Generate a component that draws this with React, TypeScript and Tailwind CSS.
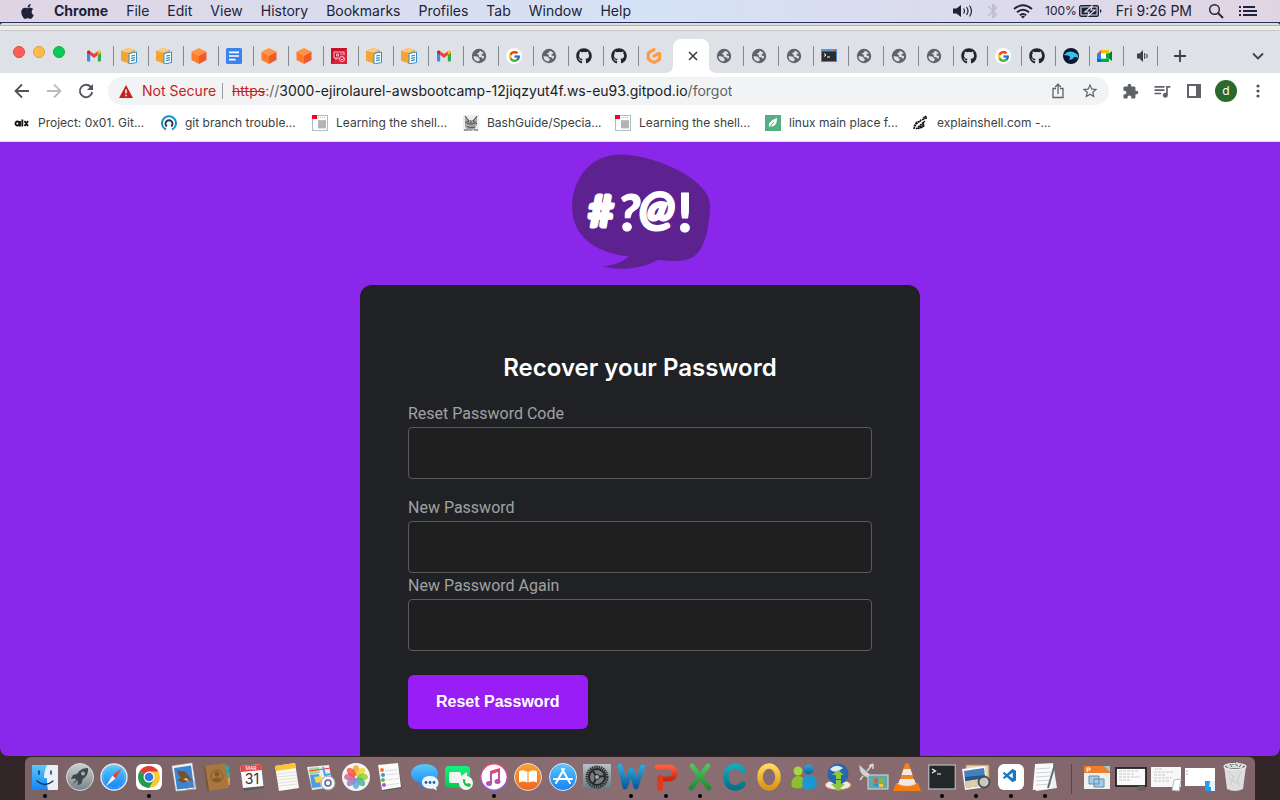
import type { ReactNode } from "react";
import { FaApple, FaGithub } from "react-icons/fa";
import { FcGoogle } from "react-icons/fc";
import { SiGitpod } from "react-icons/si";
import { MdBluetooth, MdExtension, MdQueueMusic, MdStarBorder } from "react-icons/md";
import { VscVscode } from "react-icons/vsc";

/* ---------- favicons ---------- */

const Gmail = () => (
  <svg viewBox="0 0 16 16" className="size-4">
    <path d="M1 13.4V4.2l3.2 2.4v6.8H2a1 1 0 0 1-1-1z" fill="#4285f4" />
    <path d="M15 13.4V4.2l-3.2 2.4v6.8H14a1 1 0 0 0 1-1z" fill="#34a853" />
    <path d="M11.8 3.3v3.8L15 4.7V4c0-1.500-1.600-1.900-2.500-1.300z" fill="#fbbc04" />
    <path d="M4.200 7.100V3.300L8 6.100l3.800-2.800v3.800L8 10z" fill="#ea4335" />
    <path d="M1 4v.7l3.200 2.400V3.300l-.7-.6C2.600 2.100 1 2.500 1 4z" fill="#c5221f" />
  </svg>
);

const BoxDoc = () => (
  <svg viewBox="0 0 16 16" className="size-4">
    <path d="M0 3 7 0l7 2v3l-6 1v9.500L0 12.500z" fill="#f2a83b" />
    <path d="m0 3 7 1.800L14 2 7 0z" fill="#f8c98a" />
    <path d="M0 3v9.500l7 2.500V4.800z" fill="#f0a535" />
    <path d="M8 5.500 15.500 4v10.500L8 16z" fill="#fff" stroke="#2d8fc4" />
    <path d="m10 8 4-.7M10 10.300l4-.7M10 12.600l4-.7" stroke="#2d8fc4" strokeWidth="1.200" />
  </svg>
);

const OrangeCube = () => (
  <svg viewBox="0 0 16 16" className="size-4">
    <path d="m8 0 7.500 3.800L8 7.800.5 3.800z" fill="#ff9340" />
    <path d="M.5 3.800 8 7.800V16L.5 12z" fill="#ff7a2d" />
    <path d="M15.500 3.800 8 7.800V16l7.500-4z" fill="#ee5b2b" />
  </svg>
);

const Docs = () => (
  <svg viewBox="0 0 16 16" className="size-4">
    <rect width="16" height="16" rx="1.500" fill="#3b82f0" />
    <path d="M3 4.300h10M3 8h10M3 11.700h6.500" stroke="#fff" strokeWidth="1.700" />
  </svg>
);

const RedAws = () => (
  <svg viewBox="0 0 16 16" className="size-4">
    <rect width="16" height="16" fill="#c8102e" />
    <path d="M16 0v16H0z" fill="#dc2338" />
    <g fill="none" stroke="#f9c5cc">
      <path d="M8 10H3V4h10v3M5.500 6h2v2h-2zM9 6h2.500M5 10v2" />
      <circle cx="11" cy="11" r="2.500" />
      <path d="m10 11 1 1 2-2" />
    </g>
  </svg>
);

const Globe = () => (
  <svg viewBox="0 0 16 16" className="size-4">
    <circle cx="8" cy="8" r="7.200" fill="#5f6368" />
    <path d="M2.500 8.300c1.800-.3 3.300-.2 4.400.5.900.6.300 1.400 1.200 1.800 1 .3.900.8.600 1.500-.3.700-.9.800-1.100 1.400C4.600 13.500 2.500 11.200 2.500 8.300z" fill="#dee1e6" />
    <path d="M9 3c1.500.2 2.700 1 3.600 2.300-.5.700-1.300.6-1.900 1-.7.500-.1 1.200.6 1.400.7.200 1.400 0 1.800.4 0 1-.4 2-.9 2.800-.8.100-.9-.9-1.600-1.300-.9-.5-2.200-.1-2.700-1-.4-1 .2-1.300-.2-1.800-.5-.5-1.500-.2-1.700-1 0-.8 1.400-.8 1.900-1.300.5-.6.300-1.200 1.100-1.500z" fill="#dee1e6" />
  </svg>
);
const Github = () => <FaGithub className="size-4 text-[#22262b]" />;
const Google = () => (
  <span className="flex size-4 items-center justify-center rounded-full bg-white">
    <FcGoogle className="size-[13px]" />
  </span>
);
const Gitpod = () => <SiGitpod className="size-4 text-[#ff9b45]" />;

const TerminalFav = () => (
  <svg viewBox="0 0 16 16" className="size-4">
    <rect y="1" width="16" height="13" fill="#4a86c8" />
    <path d="M0 1h16v2.500H0z" fill="#5c98dc" />
    <path d="M13 1.500h2v1.500h-2z" fill="#f0502c" />
    <rect x="1" y="3.500" width="14" height="9.500" fill="#2b2d30" />
    <path d="m3 5.500 2 1.500-2 1.500M6 9h3" fill="none" stroke="#fff" />
  </svg>
);

const WaveFav = () => (
  <svg viewBox="0 0 16 16" className="size-4">
    <circle cx="8" cy="8" r="8" fill="#06182d" />
    <path d="M.8 7.500C3 3.500 7 2.800 10.500 4l3.800 2.200c.9 1.200.7 2.800.2 4.300-.7-1.500-2-1.800-3.500-1.500-.7 2.300-2.800 3-5.500 2.700 1.500-.9 1.800-2 1.300-3.200C4.500 7.300 2.500 7.200.8 7.500z" fill="#3cbdf0" />
  </svg>
);

const Meet = () => (
  <svg viewBox="0 0 16 16" className="size-4">
    <path d="M4 2h7a1 1 0 0 1 1 1v2.500H4z" fill="#fbbc04" />
    <path d="M4 2v4H0z" fill="#ea4335" />
    <path d="M0 6h4v5H0z" fill="#2684fc" />
    <path d="M0 11h4v3H1a1 1 0 0 1-1-1z" fill="#0066da" />
    <path d="M4 10.500h8V13a1 1 0 0 1-1 1H4z" fill="#00ac47" />
    <path d="M4 5.500h5v5H4z" fill="#fff" />
    <path d="m9 8 6-5v10z" fill="#00832d" />
    <path d="M9 5.500h3v5H9z" fill="#00ac47" />
  </svg>
);

const AudioTab = () => (
  <svg viewBox="0 0 16 16" className="ml-1 size-4">
    <path d="M2 5.500h2.500L8 2v12l-3.500-3.500H2z" fill="#3c4043" />
    <path d="M9.700 5v6M12 6v4" stroke="#3c4043" strokeWidth="1.100" />
  </svg>
);

type Fav = { title: string; icon: () => ReactNode };
const t = (title: string, icon: () => ReactNode): Fav => ({ title, icon });

const leftTabs: Fav[] = [
  t("Gmail", Gmail), t("Storage", BoxDoc), t("Storage", BoxDoc), t("Cube", OrangeCube), t("Docs", Docs),
  t("Cube", OrangeCube), t("Cube", OrangeCube), t("Console", RedAws), t("Storage", BoxDoc), t("Storage", BoxDoc),
  t("Gmail", Gmail), t("Site", Globe), t("Google", Google), t("Site", Globe), t("GitHub", Github),
  t("GitHub", Github), t("Gitpod", Gitpod),
];
const midTabs: Fav[] = [
  t("Site", Globe), t("Site", Globe), t("Site", Globe), t("Terminal", TerminalFav),
  t("Site", Globe), t("Site", Globe), t("Site", Globe),
];
const rightTabs: Fav[] = [
  t("GitHub", Github), t("Google", Google), t("GitHub", Github), t("Wave", WaveFav), t("Meet", Meet), t("Audio", AudioTab),
];

function Tab({ tab, last, narrow }: { tab: Fav; last?: boolean; narrow?: boolean }) {
  return (
    <button
      aria-label={tab.title}
      className={`flex h-5 shrink-0 items-center border-r pl-[7px] ${narrow ? "w-[34px]" : "w-[35px]"} ${
        last ? "border-transparent" : "border-[#85888d]"
      }`}
    >
      {tab.icon()}
    </button>
  );
}

/* ---------- menu bar ---------- */

const menus = ["File", "Edit", "View", "History", "Bookmarks", "Profiles", "Tab", "Window", "Help"];

function MenuBar() {
  return (
    <header className="flex h-[23px] shrink-0 items-center justify-between border-b border-[#27305c] bg-linear-to-r from-[#dfd5e4] via-[#d5e2f6] to-[#e1d5e3] pr-[23px] pl-[19px] text-sm text-[#20223a]">
      <nav className="flex items-center gap-[18px]">
        <button aria-label="Apple menu"><FaApple className="size-[17px]" /></button>
        <button className="font-bold">Chrome</button>
        {menus.map((m) => <button key={m}>{m}</button>)}
      </nav>
      <div className="flex items-center">
        <svg viewBox="0 0 22 16" className="h-4 w-[22px]">
          <path d="M1 5.500h3.500L9 2v12l-4.500-3.500H1z" fill="#20223a" />
          <path d="M11.500 5.500q2 2.500 0 5M14.500 4q3 4 0 8M17.500 2.500q4 5.500 0 11" fill="none" stroke="#20223a" strokeWidth="1.200" />
        </svg>
        <MdBluetooth className="ml-[10px] size-[18px] text-[#b9bdcf]" />
        <svg viewBox="0 0 20 15" className="ml-[11px] h-[15px] w-5">
          <g fill="none" stroke="#20223a" strokeWidth="1.900">
            <path d="M1 5q9-7.500 18 0M4 8.200q6-5 12 0M6.800 11.200q3.200-2.600 6.400 0" />
          </g>
          <path d="m8 12.500 2 2 2-2q-2-1.500-4 0z" fill="#20223a" />
        </svg>
        <span className="ml-3 text-xs">100%</span>
        <svg viewBox="0 0 23 12" className="ml-[2px] h-3 w-[23px]">
          <rect x=".7" y=".7" width="18.600" height="10.600" rx="1.500" fill="none" stroke="#20223a" strokeWidth="1.400" />
          <rect x="2.500" y="2.500" width="15" height="7" fill="#20223a" />
          <path d="M13 1 6 7h4l-1 4 7-6h-4z" fill="#20223a" stroke="#dfe2f2" strokeWidth="1.200" />
          <path d="M21 4v4l1.300-1V5z" fill="#20223a" />
        </svg>
        <span className="ml-[14px]">Fri 9:26 PM</span>
        <svg viewBox="0 0 16 16" className="ml-4 size-4">
          <circle cx="6.500" cy="6.500" r="4.800" fill="none" stroke="#20223a" strokeWidth="1.400" />
          <path d="m10 10 5 5" stroke="#20223a" strokeWidth="1.800" />
        </svg>
        <svg viewBox="0 0 18 12" className="ml-[15px] h-3 w-[18px]">
          <path d="M0 2h2M0 6h2M0 10h2M4 2h12M4 6h14M4 10h14" stroke="#20223a" strokeWidth="1.900" />
        </svg>
      </div>
    </header>
  );
}

/* ---------- browser chrome ---------- */

function TabStrip() {
  return (
    <div className="flex h-[42px] shrink-0 items-end bg-[#dee1e6]">
      <div className="flex h-[42px] w-[79px] shrink-0 items-center gap-2 pl-[13px]">
        <button aria-label="Close window" className="size-3 rounded-full border border-[#e2463f] bg-[#ff5f57]" />
        <button aria-label="Minimise window" className="size-3 rounded-full border border-[#e2a03a] bg-[#febc4a]" />
        <button aria-label="Zoom window" className="size-3 rounded-full border border-[#12ac3e] bg-[#0acb55]" />
      </div>
      <div className="flex pb-[7px]">
        {leftTabs.map((tab, i) => <Tab key={i} tab={tab} last={i === leftTabs.length - 1} />)}
      </div>
      <div className="-ml-[9px] flex shrink-0 items-end">
        <svg viewBox="0 0 8 8" className="size-2"><path d="M8 0v8H0q8 0 8-8" fill="#fff" /></svg>
        <button aria-label="Close tab" className="flex h-[34px] w-[36px] items-center justify-center rounded-t-lg bg-white pl-1">
          <svg viewBox="0 0 10 10" className="size-[10px]"><path d="m1 1 8 8M9 1 1 9" stroke="#3c4043" strokeWidth="1.600" /></svg>
        </button>
        <svg viewBox="0 0 8 8" className="size-2"><path d="M0 0v8h8q-8 0-8-8" fill="#fff" /></svg>
      </div>
      <div className="-ml-2 flex pb-[7px]">
        {midTabs.map((tab, i) => <Tab key={i} tab={tab} />)}
        {rightTabs.map((tab, i) => <Tab key={i} tab={tab} narrow />)}
      </div>
      <button aria-label="New tab" className="mb-[10px] ml-[15px]">
        <svg viewBox="0 0 14 14" className="size-[14px]"><path d="M7 1v12M1 7h12" stroke="#3c4043" strokeWidth="1.800" /></svg>
      </button>
      <button aria-label="Search tabs" className="mr-4 mb-[13px] ml-auto">
        <svg viewBox="0 0 12 8" className="h-2 w-3"><path d="m1 1.500 5 5 5-5" fill="none" stroke="#3c4043" strokeWidth="1.800" /></svg>
      </button>
    </div>
  );
}

function Toolbar() {
  return (
    <div className="flex h-9 shrink-0 items-center bg-white pr-[14px] pl-[14px] text-[#5f6368]">
      <button aria-label="Back">
        <svg viewBox="0 0 16 16" className="size-4"><path d="M15 8H2M8 1.500 1.500 8 8 14.500" fill="none" stroke="#50545a" strokeWidth="1.800" /></svg>
      </button>
      <button aria-label="Forward" className="ml-4">
        <svg viewBox="0 0 16 16" className="size-4"><path d="M1 8h13M8 1.500 14.500 8 8 14.500" fill="none" stroke="#b9bbbe" strokeWidth="1.800" /></svg>
      </button>
      <button aria-label="Reload" className="ml-4">
        <svg viewBox="0 0 16 16" className="size-4">
          <path d="M13.200 4.500A6.200 6.200 0 1 0 14.200 9" fill="none" stroke="#50545a" strokeWidth="1.900" />
          <path d="M15 1v6H9z" fill="#50545a" />
        </svg>
      </button>
      <div className="ml-[14px] flex h-7 min-w-0 flex-1 items-center rounded-full bg-[#f1f3f4] pr-[10px] pl-[11px] text-sm">
        <svg viewBox="0 0 14 13" className="h-[13px] w-[14px] shrink-0">
          <path d="M7 0 14 13H0z" fill="#c5221f" />
          <path d="M7 4.500V8.500M7 9.800v1.500" stroke="#fff" strokeWidth="1.500" />
        </svg>
        <span className="ml-[9px] whitespace-nowrap text-[#c5221f]">Not Secure</span>
        <span className="mr-[9px] ml-[6px] h-4 w-px shrink-0 bg-[#9a9da1]" />
        <a href="#forgot" className="truncate text-[#5f6368]">
          <s className="text-[#c5221f]">https</s>://<span className="text-[#202124]">3000-ejirolaurel-awsbootcamp-12jiqzyut4f.ws-eu93.gitpod.io</span>/forgot
        </a>
        <button aria-label="Share" className="ml-auto">
          <svg viewBox="0 0 12 16" className="h-4 w-3">
            <path d="M4 5.500H1v9h10v-9H8M6 11V2M3.200 4 6 1.200 8.800 4" fill="none" stroke="#5f6368" strokeWidth="1.300" />
          </svg>
        </button>
        <button aria-label="Bookmark this page" className="ml-[17px]"><MdStarBorder className="size-[18px]" /></button>
      </div>
      <button aria-label="Extensions" className="ml-[13px]"><MdExtension className="size-[17px]" /></button>
      <button aria-label="Media controls" className="ml-[13px]"><MdQueueMusic className="size-[20px]" /></button>
      <button aria-label="Side panel" className="ml-[15px]">
        <svg viewBox="0 0 14 14" className="size-[14px]">
          <rect x="1" y="1" width="12" height="12" fill="none" stroke="#5f6368" strokeWidth="2" />
          <path d="M9 1h4v12H9z" fill="#5f6368" />
        </svg>
      </button>
      <button className="ml-[14px] size-[22px] rounded-full bg-[#2b6a2c] text-xs leading-[22px] text-white">d</button>
      <button aria-label="Menu" className="ml-[13px]">
        <svg viewBox="0 0 16 16" className="size-4 fill-[#50545a]">
          <circle cx="8" cy="3" r="1.600" /><circle cx="8" cy="8" r="1.600" /><circle cx="8" cy="13" r="1.600" />
        </svg>
      </button>
    </div>
  );
}

const PageIcon = () => (
  <svg viewBox="0 0 16 16" className="size-4">
    <rect x=".5" y=".5" width="15" height="15" fill="#fff" stroke="#a8bfc7" />
    <rect width="5" height="4" fill="#f5001d" />
    <path d="M6 2.500h8" stroke="#bbb" strokeDasharray="1 1" />
    <path d="M6 6h8M6 8h8M6 10h8M6 12h8" stroke="#9b9b9b" />
    <path d="M6 5.500h8v8H6z" fill="#aaa" opacity=".7" />
  </svg>
);

const bookmarks: { label: string; width: string; icon: ReactNode }[] = [
  {
    label: "Project: 0x01. Git...", width: "w-[147px]",
    icon: (
      <svg viewBox="0 0 16 16" className="size-4">
        <g fill="none" stroke="#111" strokeWidth="1.800"><circle cx="3.400" cy="8.500" r="2" /><path d="M6 6v5.500M8.300 4.500v7M10.500 6l3.500 5M14 6l-3.500 5" /></g>
      </svg>
    ),
  },
  {
    label: "git branch trouble...", width: "w-[151px]",
    icon: (
      <svg viewBox="0 0 16 16" className="size-4">
        <path d="M5 14.600A7 7 0 1 1 11 14.600" fill="none" stroke="#1590cb" strokeWidth="2" />
        <path d="M5.800 11.500a3.500 3.500 0 1 1 4.400 0" fill="none" stroke="#233b55" strokeWidth="2" />
      </svg>
    ),
  },
  { label: "Learning the shell...", width: "w-[151px]", icon: <PageIcon /> },
  {
    label: "BashGuide/Specia...", width: "w-[152px]",
    icon: (
      <svg viewBox="0 0 16 16" className="size-4">
        <rect width="16" height="16" fill="#ededed" />
        <path d="m2 1 4 4h4l4-4v7l-1 4-4 4H6l-4-4z" fill="#a5a5a5" />
        <path d="m2 1 4 5-4 2M14 1l-4 5 4 3M4 8l3 1M9 9l3-1M4 11l3 2 2-1 3 1M1 15h4M11 15h4M8 6v4" stroke="#4d4d4d" fill="none" />
      </svg>
    ),
  },
  { label: "Learning the shell...", width: "w-[150px]", icon: <PageIcon /> },
  {
    label: "linux main place f...", width: "w-[148px]",
    icon: (
      <svg viewBox="0 0 16 16" className="size-4">
        <rect width="16" height="16" fill="#52b082" />
        <path d="M4 12c-1-5 3-7 8-9 0 6-2 9-7 8.500" fill="#fff" />
        <path d="m4 13 5-6" stroke="#52b082" />
      </svg>
    ),
  },
  {
    label: "explainshell.com -...", width: "w-[151px]",
    icon: (
      <svg viewBox="0 0 16 16" className="size-4">
        <path d="M1 14c0-3 2-3 2-6 2-2 4 0 5-3l3-1M3 14l8-7M5 14l6-5M1 11l7-6" stroke="#111" strokeWidth="1.600" strokeDasharray="2 .7" fill="none" />
        <path d="m10 3 3-2M11 4l3-1M13 1v3M12 6l-2 2 1 3-3 2-2-2" fill="none" stroke="#111" strokeWidth="1.200" />
      </svg>
    ),
  },
];

function BookmarksBar() {
  return (
    <nav className="flex h-[33px] shrink-0 items-center overflow-hidden border-b border-[#dcdde0] bg-white pb-1 pl-[14px] text-xs text-[#3c4043]">
      {bookmarks.map((b, i) => (
        <a key={i} href="#bookmark" className={`flex shrink-0 items-center gap-2 whitespace-nowrap ${b.width}`}>
          {b.icon}
          {b.label}
        </a>
      ))}
    </nav>
  );
}

/* ---------- page ---------- */

function Logo() {
  return (
    <svg viewBox="0 2 180 143" className="mx-auto block h-[143px] w-[180px]" role="img" aria-label="#?@!">
      <path
        d="M22 66C23 36 42 15 70 14.500 100 14 158 37 160 64c0 15-2 29-7 40-5 12-13 17-27 17-7 0-12-.5-18-1-18 9-36 11-56 6.500 11-1 19-4 27-10C46 113 22 97 22 66z"
        fill="#5d2290"
      />
      <g fill="#fff" stroke="#fff" fontFamily="Lato" strokeLinejoin="round" textAnchor="middle">
        <text x="51" y="87" fontSize="44" fontWeight="900" strokeWidth="3">#</text>
        <text x="79" y="91" fontSize="52" fontWeight="900" fontStyle="italic" strokeWidth="1">?</text>
        <text x="107" y="84" fontSize="46" fontWeight="700" fontStyle="italic" strokeWidth="3">@</text>
        <text x="135" y="92" fontSize="54" fontWeight="900" strokeWidth="1">!</text>
      </g>
    </svg>
  );
}

function Field({ id, label }: { id: string; label: string }) {
  return (
    <div>
      <label htmlFor={id} className="block font-[Roboto,sans-serif] leading-[26px] text-[#a1a2a3]">{label}</label>
      <input id={id} type="text" className="block h-[52px] w-full rounded border border-[#5b5b5c] bg-[#1f1f1f] px-4 text-white" />
    </div>
  );
}

function RecoverPage() {
  return (
    <main className="min-h-0 flex-1 overflow-hidden rounded-b-lg bg-[#8b27eb]">
      <Logo />
      <form className="mx-auto max-w-[560px] rounded-xl bg-[#202124] px-12 pt-[69px] pb-16" onSubmit={(e) => e.preventDefault()}>
        <h1 className="mb-[19px] text-center text-2xl leading-7 font-semibold text-white">Recover your Password</h1>
        <div className="mb-4"><Field id="code" label="Reset Password Code" /></div>
        <Field id="password" label="New Password" />
        <Field id="password-again" label="New Password Again" />
        <button className="mt-6 h-[54px] rounded-md bg-[#991df5] px-7 font-['Liberation_Sans',sans-serif] font-bold text-white">
          Reset Password
        </button>
      </form>
    </main>
  );
}

/* ---------- dock ---------- */

function Defs() {
  const grads: [string, string, string][] = [
    ["gSky", "#5ac8fa", "#1583f5"], ["gSilver", "#c9cfd2", "#798488"], ["gOrange", "#fba62c", "#ee6420"],
    ["gGreen", "#16f281", "#05c94b"], ["gMusic", "#f53d66", "#8b5bf5"], ["gPrefs", "#b8c2c8", "#69757c"],
    ["gRed", "#ff5b3e", "#c9280f"], ["gExcel", "#52c25a", "#228b35"], ["gTeal", "#15a9bd", "#04728c"],
    ["gGold", "#ffd85c", "#dc9516"], ["gWord", "#2aa8e0", "#0b5e9c"],
  ];
  return (
    <svg className="absolute size-0" aria-hidden="true">
      <defs>
        {grads.map(([id, a, b]) => (
          <linearGradient key={id} id={id} x1="0" y1="0" x2="0" y2="1">
            <stop offset="0" stopColor={a} />
            <stop offset="1" stopColor={b} />
          </linearGradient>
        ))}
      </defs>
    </svg>
  );
}

const petals = ["#f5a623", "#e5d932", "#9bcb3c", "#52b788", "#5da9dc", "#9b7fc4", "#d56aa0", "#ee5a46"];

type DockItem = { name: string; running?: boolean; art: ReactNode };

const dockApps: DockItem[] = [
  { name: "Finder", running: true, art: (
    <>
      <rect x="1" y="2" width="26" height="25" rx="1" fill="#e8f0f8" />
      <path d="M2 2h14c-2 4-3 8-3 13h3c0 5 0 8 1 12H2a1 1 0 0 1-1-1V3a1 1 0 0 1 1-1z" fill="url(#gSky)" />
      <path d="M8 8v3M20 8v3" stroke="#17324e" strokeWidth="1.500" strokeLinecap="round" />
      <path d="M6 18q8 7 16 0" fill="none" stroke="#17324e" strokeWidth="1.300" strokeLinecap="round" />
    </>
  ) },
  { name: "Launchpad", art: (
    <>
      <circle cx="14" cy="14" r="13.500" fill="url(#gSilver)" stroke="#d5dadd" />
      <path d="M22 5c-6 0-9 3-11 6l-4 1-2 4 4-.5 3 3-.5 4 4-2 1-4c4-3 6-6 5.500-11.500z" fill="#3f474c" />
      <circle cx="17" cy="10.500" r="2" fill="#a5adb1" /><path d="m6 22 4-5 1 1z" fill="#3f474c" />
    </>
  ) },
  { name: "Safari", art: (
    <>
      <circle cx="14" cy="14" r="13.700" fill="#e7eaec" />
      <circle cx="14" cy="14" r="12.300" fill="url(#gSky)" />
      <circle cx="14" cy="14" r="10.800" fill="none" stroke="#d9efff" strokeDasharray=".5 1.600" />
      <path d="M22 5 15.500 15.500 12.500 12.500z" fill="#f23b3b" /><path d="m6 23 6.500-10.500 3 3z" fill="#f4f4f4" />
    </>
  ) },
  { name: "Chrome", running: true, art: (
    <>
      <rect x="1" y="1" width="26" height="26" rx="6" fill="#fff" />
      <path d="M14 14 4.500 8.500A11 11 0 0 1 23.500 8.500z" fill="#e33b2e" />
      <path d="M14 14V8.500h9.500A11 11 0 0 1 14 25z" fill="#fcc934" />
      <path d="m14 14 4.800 2.800L14 25A11 11 0 0 1 4.500 8.500z" fill="#229a4b" />
      <circle cx="14" cy="14" r="5.500" fill="#fff" /><circle cx="14" cy="14" r="4.300" fill="#2f78e8" />
    </>
  ) },
  { name: "Mail", art: (
    <>
      <path d="m3 3 20-3 4 26-20 2z" fill="#f3f4f2" stroke="#ccc" strokeDasharray="1 1" />
      <path d="m5 5 17-2.500 3 22-17 2z" fill="#3b86ce" />
      <path d="M8 7q4 2 7 1 4 3 6 7l3 2-5 1q-4 3-7 1l-4-2 4-2q-3-3-4-8z" fill="#79502f" /><path d="m14 16 4-1 2 4z" fill="#e0c29a" />
      <circle cx="21" cy="22" r="5" fill="none" stroke="#72727d" opacity=".6" />
    </>
  ) },
  { name: "Contacts", art: (
    <>
      <path d="m20 2 5 1v5l-3 1zM22 9h4v6h-4z" fill="#3ca6a4" /><path d="M22 15h4v7h-3z" fill="#e79a31" />
      <path d="m1 3 20-3 4 25-20 3z" fill="#a87740" /><path d="m1 3 4 25-2-1L0 4z" fill="#795329" />
      <circle cx="13" cy="13" r="6" fill="none" stroke="#835a2c" /><circle cx="13" cy="11" r="2.500" fill="#835a2c" /><path d="M8 17q5-5 10 0-5 4-10 0" fill="#835a2c" />
    </>
  ) },
  { name: "Calendar", art: (
    <>
      <path d="m2 3 21-2 3 24-20 3z" fill="#575a60" /><path d="m2 3 21-2 2.500 22L5 25z" fill="#fafafa" />
      <path d="m2 3 21-2 1 6-21 2z" fill="#e6474a" />
      <text x="13" y="7" fontSize="5" fill="#fff" textAnchor="middle">MAR</text>
      <text x="14" y="21" fontSize="14" fill="#333" textAnchor="middle">31</text>
    </>
  ) },
  { name: "Notes", art: (
    <>
      <path d="m2 3 20-3 4 25-20 3z" fill="#faf9f4" /><path d="m2 3 20-3 1 5-20 3z" fill="#f9c535" />
      <path d="m4 11 19-2M4 14l20-2M5 17l19-2M5 20l20-2M6 23l19-2" stroke="#d7d7d2" strokeWidth=".7" />
    </>
  ) },
  { name: "Maps", art: (
    <>
      <path d="m0 4 22-2 4 22-21 3z" fill="#eceeea" /><path d="m2 5 10-1 1 6-10 2z" fill="#a9d894" /><path d="m2 8 22-3" stroke="#f35" />
      <path d="m3 12 9-1 2 13-9 1z" fill="#4b9de9" /><path d="m7 14 7-1 1 6-6 1z" fill="#f6d44c" /><path d="m16 4 2 8 6-1" fill="none" stroke="#4aa5e8" strokeWidth="2" />
      <circle cx="21" cy="20" r="7" fill="#f4f6f7" stroke="#9ba7ae" /><circle cx="21" cy="20" r="3" fill="none" stroke="#668" strokeWidth="1.500" />
    </>
  ) },
  { name: "Photos", art: (
    <>
      <circle cx="14" cy="14" r="14" fill="#f6f4f2" />
      {petals.map((c, i) => <ellipse key={c} cx="14" cy="7.500" rx="3.500" ry="5.500" fill={c} opacity=".85" transform={`rotate(${i * 45} 14 14)`} />)}
    </>
  ) },
  { name: "Reminders", art: (
    <>
      <path d="m2 3 20-3 4 25-19 3z" fill="#555" /><path d="m2 2 20-2 3 24-19 3z" fill="#fbfbfa" />
      <path d="m9 8 12-1.500M10 12l12-1.500M10 17l13-1.500M11 22l12-1.500" stroke="#ddd" />
      <circle cx="6" cy="7" r="2" fill="#f3762e" /><circle cx="7" cy="12" r="2" fill="#3a92e9" /><circle cx="7" cy="17" r="2" fill="#57bf42" /><circle cx="8" cy="22" r="2" fill="#a757cf" />
    </>
  ) },
  { name: "Messages", art: (
    <>
      <path d="M14 1c7 0 13 4 13 10s-6 10-12 10l-5 4-1-5C3 18 0 15 0 11 0 5 6 1 14 1z" fill="url(#gSky)" />
      <path d="M19 13c5 0 8.500 3 8.500 6.500 0 3-1 4-2.500 5l1 3-4-2c-6 1-11-2-11-6s3-6.500 8-6.500z" fill="#edf6ff" />
      <circle cx="15" cy="19.500" r="1.400" fill="#265f9e" /><circle cx="19" cy="19.500" r="1.400" fill="#265f9e" /><circle cx="23" cy="19.500" r="1.400" fill="#265f9e" />
    </>
  ) },
  { name: "FaceTime", art: (
    <>
      <rect y="3" width="25" height="22" rx="4" fill="url(#gGreen)" /><rect x="4" y="9" width="12" height="11" rx="2" fill="#f4f4f4" /><path d="m16 13 6-4v10l-6-3z" fill="#eee" />
      <circle cx="21" cy="20" r="7" fill="#f3f8f3" /><path d="M18 16q-1 7 7 8l1-3-3-1-1 1q-2-1-2-3l1-1z" fill="#20bd52" />
    </>
  ) },
  { name: "iTunes", running: true, art: (
    <>
      <circle cx="14" cy="14" r="13.200" fill="#fff" stroke="url(#gMusic)" strokeWidth="1.400" />
      <g fill="url(#gMusic)"><path d="m10 8 10-3v13h-2V9l-6 2v9h-2z" /><ellipse cx="9" cy="20.500" rx="3" ry="2.500" /><ellipse cx="17.500" cy="18.500" rx="3" ry="2.500" /></g>
    </>
  ) },
  { name: "Books", art: (
    <>
      <circle cx="14" cy="14" r="13.500" fill="url(#gOrange)" stroke="#e4ded9" />
      <path d="M13.500 9Q9 6 5 8.500v11q4-2 8.500 0zM14.500 9Q19 6 23 8.500v11q-4-2-8.500 0z" fill="#fff" />
    </>
  ) },
  { name: "App Store", art: (
    <>
      <circle cx="14" cy="14" r="13.500" fill="url(#gSky)" stroke="#e1e9ef" />
      <path d="m15 6-8 14M13 6l8 14M5 16h18" stroke="#fff" strokeWidth="2" strokeLinecap="round" />
    </>
  ) },
  { name: "System Preferences", art: (
    <>
      <rect y="1" width="28" height="26" fill="url(#gPrefs)" />
      <circle cx="14" cy="14" r="10" fill="#aaa" stroke="#303235" strokeWidth="3" strokeDasharray="1.500 .7" />
      <circle cx="14" cy="14" r="8" fill="#777c80" stroke="#25282b" strokeWidth="2" />
      <path d="m14 14 8-1M14 14l-5-7M14 14l-4 7" stroke="#25282b" strokeWidth="2" /><circle cx="14" cy="14" r="2.500" fill="#aaa" stroke="#25282b" />
    </>
  ) },
  { name: "Word", running: true, art: <path d="M3 3 8 24 14.500 7 19 24 25.500 4" fill="none" stroke="url(#gWord)" strokeWidth="5" strokeLinejoin="round" strokeLinecap="round" /> },
  { name: "PowerPoint", running: true, art: (
    <>
      <path d="M5 4h12q6 1 6 6t-6 6h-5" fill="none" stroke="url(#gRed)" strokeWidth="5" strokeLinecap="round" strokeLinejoin="round" />
      <path d="M8 15v10" stroke="#e13a1b" strokeWidth="6" strokeLinecap="round" />
    </>
  ) },
  { name: "Excel", running: true, art: <path d="m6 3 17 22M22 3 5 25" stroke="url(#gExcel)" strokeWidth="5" strokeLinecap="round" /> },
  { name: "Communicator", art: <path d="M22 8Q19 3 14 3 5 4 5 14t9 11q5 0 8-4" fill="none" stroke="url(#gTeal)" strokeWidth="5.500" strokeLinecap="round" /> },
  { name: "Outlook", art: <ellipse cx="14" cy="14" rx="9" ry="11" fill="none" stroke="url(#gGold)" strokeWidth="5.500" /> },
  { name: "Messenger", art: (
    <>
      <circle cx="8" cy="8" r="4.500" fill="#a8d548" /><path d="M8 13c5 0 7 4 7 9q-6 6-13 2c-2-5 1-11 6-11z" fill="#8dbe2e" />
      <circle cx="18.500" cy="6.500" r="5" fill="url(#gWord)" /><path d="M19 12c6 0 8 5 8 10q-6 8-14 3c-2-6 0-13 6-13z" fill="#1c97d4" />
    </>
  ) },
  { name: "Downloader", art: (
    <>
      <ellipse cx="14" cy="22" rx="13" ry="5" fill="#ecece7" stroke="#c87947" /><circle cx="14" cy="11" r="10.500" fill="#2866ad" />
      <path d="M6 6q6-6 13-1l-6 4-5-1z" fill="#dcecf5" /><path d="M12 17h5v4h4l-7 7-7-7h5zM14 7l6 5h-3v4h-5v-4H8z" fill="#8bc944" />
    </>
  ) },
  { name: "Remote Desktop", art: (
    <>
      <path d="M0 1q-1 9 6 13 5 2 9 1z" fill="#d2d2d0" stroke="#777" /><path d="m8 8 6-7M14 1l-4 2M14 1v5M4 13l-3 4" stroke="#d8d8d8" strokeWidth="1.500" />
      <rect x="9" y="12" width="20" height="14" fill="#62a7ab" stroke="#d6dcda" /><path d="m15 16 4-1v4l-4 1z" fill="#e65235" /><path d="m20 15 5 1v4h-5z" fill="#88b93e" /><path d="m15 21 4-1v4l-4-1z" fill="#338edc" /><path d="M20 21h4v3h-4z" fill="#f8c53a" />
    </>
  ) },
  { name: "VLC", art: (
    <>
      <path d="m3 20-3 8h28l-3-8z" fill="#f47a14" /><path d="m12 1-7 22q9 4 18 0L16 1q-2-2-4 0z" fill="#f58220" />
      <path d="M10.500 6h7l2 6h-11zM7 16h14l2 5q-9 4-18 0z" fill="#eceae6" />
    </>
  ) },
  { name: "Terminal", running: true, art: (
    <>
      <rect x=".7" y="2" width="26.600" height="24" fill="#24272a" stroke="#a9abac" strokeWidth="1.400" />
      <path d="m4 6 3.500 2L4 10M9 11h4" fill="none" stroke="#fff" strokeWidth="1.200" />
    </>
  ) },
  { name: "Preview", running: true, art: (
    <>
      <path d="M4 2h23v20H4z" fill="#e6d2b4" stroke="#b4844d" /><path d="m0 6 23-3 2 21-22 3z" fill="#f8f8f4" /><path d="m2 8 20-3 2 17-20 3z" fill="#4281bd" /><path d="m3 18 20-3 1 7-20 3z" fill="#dfcbaa" /><path d="m3 14 20-2v3L3 18z" fill="#26568a" />
      <circle cx="22" cy="19" r="5.500" fill="#bfc8c6" fillOpacity=".7" stroke="#494c4f" strokeWidth="1.800" />
    </>
  ) },
  { name: "Visual Studio Code", running: true, art: (
    <>
      <rect x="1" y="1" width="26" height="26" rx="6" fill="#fff" />
      <VscVscode x="5" y="5" width="18" height="18" color="#1679c4" />
    </>
  ) },
  { name: "TextEdit", running: true, art: (
    <>
      <path d="m4 1 18-1 4 25-21 3z" fill="#efefec" /><path d="m3 2 18-1 1 24-19 3z" fill="#fafafa" transform="rotate(5 14 14)" />
      <path d="m5 6 14-1M5 10l15-1M5 14l15-1M5 18l15-1M5 22l15-1" stroke="#c7c7cc" strokeWidth=".8" /><path d="m24 1-7 24" stroke="#5d6d80" strokeWidth="2" />
    </>
  ) },
];

const dockWindows: DockItem[] = [
  { name: "Presentation", art: (
    <>
      <rect x="1" y="3" width="26" height="23" fill="#f0f0ee" /><path d="M1 3h26v7H1z" fill="#ee7d2e" /><path d="M4 9V5h3v2H4" fill="none" stroke="#fff" /><path d="m21 3 6 6V3z" fill="#8fd0e8" />
      <path d="M6 13h10v8H6zM11 16h10v8H11z" fill="#9ed0eb" stroke="#668aa8" />
    </>
  ) },
  { name: "Minimised document", art: (
    <>
      <rect x="-1" y="5" width="30" height="18" fill="#fafafa" stroke="#222427" strokeWidth="1.800" />
      <path d="M2 8h20M2 11h15M2 14h21M2 17h11" stroke="#b8b8b8" strokeDasharray="3 1" strokeWidth=".8" /><rect x="20" y="23" width="9" height="5" rx="2.500" fill="#6e5d62" />
    </>
  ) },
  { name: "Minimised text", art: (
    <>
      <rect x="-1" y="4" width="30" height="20" fill="#f8f8f8" /><path d="M3 6h8M2 9h20M2 12h12M2 15h18M2 18h15" stroke="#bbb" strokeDasharray="3 1" strokeWidth=".8" /><path d="m22 17 7-1-2 12-7-1z" fill="#fff" stroke="#bbb" />
    </>
  ) },
  { name: "Minimised finder", art: (
    <>
      <rect x="-1" y="5" width="30" height="18" fill="#fff" /><path d="M0 8h2M0 11h2" stroke="#aaa" /><rect x="19" y="18" width="10" height="10" fill="#249df0" /><path d="M24 18h5v10h-4v-4h-2z" fill="#e4f3ff" />
    </>
  ) },
  { name: "Trash", art: (
    <>
      <path d="M3 3h22l-3 23q-8 4-16 0z" fill="#dedede" /><ellipse cx="14" cy="3.500" rx="11" ry="3" fill="#777" stroke="#eee" strokeWidth="1.200" />
      <path d="m5 3 3-3 4 2 4-3 4 3 3 0-2 3H8z" fill="#dadfd5" /><path d="m9 1 2 3M14 1l3 2M20 2l-2 2" stroke="#416a9a" /><path d="m7 9 6 5-4 8M20 9l-4 9 3 5M7 15l9 5" fill="none" stroke="#c9c9c9" />
    </>
  ) },
];

function DockIcon({ item }: { item: DockItem }) {
  return (
    <button aria-label={item.name} className="flex min-w-0 flex-1 flex-col items-center">
      <svg viewBox="0 0 28 28" className="size-7 overflow-visible">{item.art}</svg>
      <span className={`mt-[3px] size-1 rounded-full ${item.running ? "bg-black" : ""}`} />
    </button>
  );
}

function Dock() {
  return (
    <footer className="mx-[25px] mt-px flex h-[43px] shrink-0 items-start rounded-t-md bg-linear-to-r from-[#7b6265] via-[#8b6d72] to-[#806468] px-[3px] pt-[6px]">
      <Defs />
      <div className="flex min-w-0 flex-[30]">{dockApps.map((item) => <DockIcon key={item.name} item={item} />)}</div>
      <span className="mx-2 mt-px h-[30px] w-px bg-[#584549]" />
      <div className="flex min-w-0 flex-[5]">{dockWindows.map((item) => <DockIcon key={item.name} item={item} />)}</div>
    </footer>
  );
}

export default function App() {
  return (
    <div className="flex h-screen flex-col overflow-hidden bg-[#322629] font-[Inter,sans-serif]">
      <MenuBar />
      <div className="h-[3px] shrink-0 rounded-t border-b border-[#b2b3b1] bg-[#dededc]" />
      <div className="h-[5px] shrink-0 border-b border-[#c9cac9] bg-[#ecece9]" />
      <TabStrip />
      <Toolbar />
      <BookmarksBar />
      <RecoverPage />
      <Dock />
    </div>
  );
}
